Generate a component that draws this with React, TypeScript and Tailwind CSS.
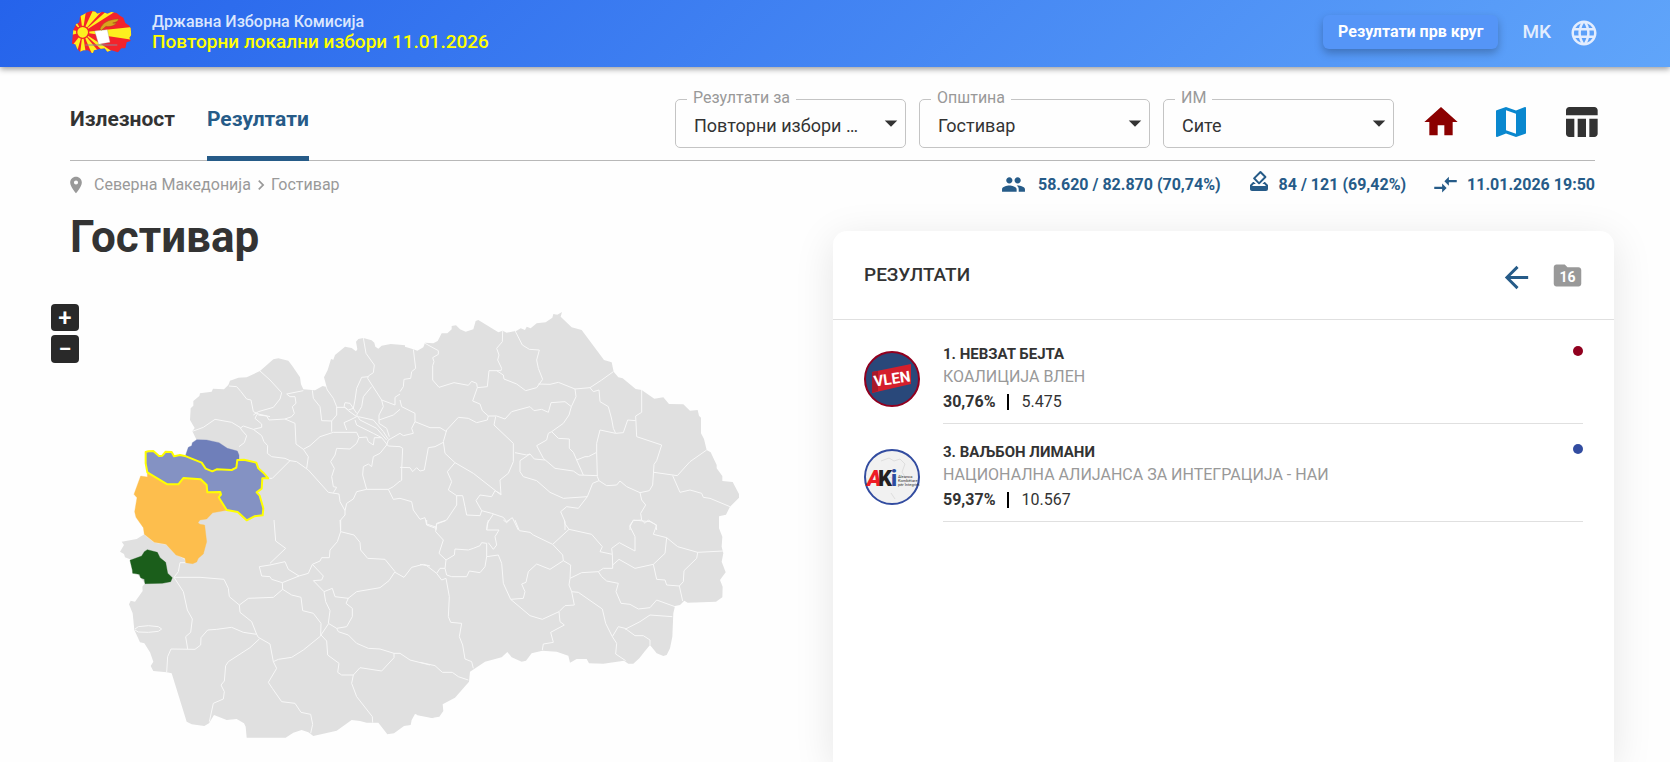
import React, { useState } from 'react'
import { MdArrowBack, MdArrowDropDown, MdChevronRight, MdCompareArrows, MdFolder, MdHome, MdHowToVote, MdLanguage, MdMap, MdPeople, MdPlace, MdTableChart } from 'react-icons/md'

// the map is split in four sheets, each with its own origin
const sheets = [
  {
    name: 'north-west',
    origin: 'translate(120 870)',
    land: '400,735 400,600 440,500 470,450 457,424 464,414 450,390 452,355 460,347 460,333 478,318 480,310 515,305 519,296 552,298 565,285 570,272 595,263 620,262 660,243 700,208 715,205 745,212 757,228 780,262 783,283 790,298 825,301 848,288 860,291 852,262 863,240 873,207 880,209 885,195 915,170 935,174 948,184 952,178 948,155 955,147 970,144 995,151 1003,158 1006,170 1015,176 1025,167 1052,162 1080,164 1095,166 1095,735',
    borders: [
      '457,424 490,412 525,388 575,397 600,412 605,420 620,437 613,458 597,470',
      '567,288 590,290 603,305 620,327 633,330 640,365 655,372 690,380',
      '660,243 690,270 725,308 720,327 700,352 655,365 640,375',
      '600,415 610,408 640,418 665,412 665,402 645,385 650,375 655,370',
      '655,375 680,378 687,390 735,387 755,380 763,370 757,350 768,340 765,320 750,320 740,312 790,302',
      '735,387 765,400 768,462 790,478 805,500 800,535',
      '640,418 665,437 672,455 683,467 682,490 695,500 735,505 750,512',
      '672,565 697,565 750,512 770,515 805,540 865,607 897,612 900,635 915,662 915,675 902,690 902,720',
      '817,301 820,325 840,350 845,392 875,393 890,375 890,350 880,325 862,300 858,290',
      '875,393 875,425',
      '790,478 810,467 840,440 880,427 950,427 957,443 980,441 985,455 1000,465 1003,443 1025,443 1045,468 1080,470',
      '957,443 950,460 930,477 890,475 885,495 872,515 883,535 875,560 880,590 890,592 880,608',
      '915,662 920,640 940,627 950,605 980,598 968,555 970,530 985,522 995,530 1000,500 1020,490 1040,465',
      '980,598 1045,598 1060,628 1080,625',
      '1045,598 1060,590 1080,573',
      '970,144 978,190 1003,225 1000,248 985,258 983,265 1025,330 1065,345 1065,322 1080,312',
      '985,260 965,262 950,295 945,330 940,355 925,360 912,350 915,338 930,340 950,370',
      '995,290 970,320 965,350 950,375',
      '1025,330 1030,350 1017,375 1017,400 1040,415 1048,440',
      '1017,390 1060,375 1080,358',
      '950,375 960,390 1010,415 1040,450',
      '955,380 1000,390 1030,425 1045,448',
      '890,352 915,352 925,362 950,380 930,390 912,398 920,420',
      '945,390 950,405 1000,430 1025,443',
      '1040,465 1045,450 1080,430',
    ],
  },
  {
    name: 'north-east',
    origin: 'translate(1200 870)',
    land: '-10,165 0,166 40,178 52,182 70,172 75,158 100,160 113,153 125,130 142,130 155,118 155,108 168,106 180,118 197,125 220,118 227,93 235,90 295,127 308,122 320,128 350,122 362,115 375,120 380,110 392,115 410,100 437,97 457,83 460,72 472,74 486,66 482,80 515,112 545,120 612,210 635,217 641,245 655,262 668,265 707,297 725,300 763,326 790,322 807,342 850,343 870,362 893,360 897,377 903,383 903,430 912,447 920,480 932,487 950,525 950,535 967,558 967,573 998,576 1017,612 1017,623 990,650 978,674 957,679 957,735 -10,735',
    borders: [
      '40,178 47,235 35,245 32,265 12,268 10,290 0,305',
      '75,160 115,182 115,193 98,203 102,215 98,227 98,270 117,292 162,278 205,286 215,274 230,280 232,293 218,333 240,342 247,362 265,378 290,378 315,387 335,365 390,350 402,362 425,358 445,367 453,338 495,335 514,350 507,375 490,400 455,425',
      '232,293 262,290 267,242 303,242 305,235 293,210 297,195 290,175 307,155 308,122',
      '290,242 310,255 312,267 350,282 377,302 410,293 428,268 415,235 410,210 418,180 388,178 367,165 345,122',
      '415,282 450,283 475,277 495,285 525,297 570,293 605,270 640,245',
      '525,297 528,320 514,350',
      '570,293 580,305 597,300 600,335 625,350 635,387 640,415 647,430 600,420 590,460 590,487 592,560 597,572',
      '725,300 725,367 707,378 710,440 785,465 770,512 762,523 758,585 748,602 720,608 680,590 660,573 650,585 620,587 597,572 578,580 562,620 535,655 500,650 482,665 495,695 495,720',
      '707,392 683,390 670,428 647,430',
      '762,547 832,557 870,515 920,480',
      '818,557 840,607 870,600 905,610 910,622 930,625 990,650',
      '562,620 490,625 450,607 410,572 370,560 360,545 360,512 390,492 403,507 435,510',
      '345,488 380,495 390,492',
      '455,425 445,430 440,450 410,467 430,505 465,535 520,543 537,555 592,557',
      '455,425 475,445 508,447 508,475 520,487 530,510 550,555',
      '530,510 555,500 565,500 590,487',
      '287,380 282,405 340,460 340,515 325,550 300,570 303,615 220,550 165,518 135,490 130,455 140,420 175,382 205,385 230,398 262,390 265,378',
      '45,370 45,395 90,413 120,413 140,425',
      '0,330 5,350 45,370',
      '45,395 35,415 40,430 10,437 0,430',
      '130,457 105,470 85,473 73,540 60,543 50,533 38,545 30,533 0,532',
      '0,470 8,475 5,540 5,570 0,575',
      '165,518 142,545 155,575 145,600 170,617 188,617 195,650 200,675 240,677 245,662 228,632 240,615 275,620 285,602 303,612',
      '170,617 170,645 140,690 110,700 107,715 80,705 75,683 60,688 40,660 35,635 0,625',
      '245,662 275,670 310,682 320,695 337,683 355,720',
      '280,672 262,700 260,720',
      '720,608 725,630 737,645 722,670 725,690 735,700 745,690 768,705 770,720',
      '725,690 700,692 690,705 690,720',
      '110,713 107,720',
    ],
  },
  {
    name: 'south-west',
    origin: 'translate(300 1560)',
    land: '133,0 133,43 110,57 65,65 72,75 60,95 72,102 75,112 90,118 110,160 135,190 127,200 128,213 105,245 92,242 87,253 98,280 103,330 120,367 133,370 150,397 160,425 152,438 160,453 200,457 215,460 260,605 275,613 313,618 327,610 342,585 380,600 410,597 432,610 437,620 440,653 557,653 580,638 605,630 625,637 640,648 710,632 755,600 780,603 800,608 835,608 862,643 882,640 912,618 932,615 935,600 945,582 990,592 1000,595 1000,0',
    borders: [
      '133,43 163,67 198,73 228,103 255,117 258,130',
      '257,128 240,128 235,155 222,172 300,172 372,178 385,205 388,230 418,255 445,235 520,232 548,208 547,188 515,178 510,170 485,168 478,140 510,135 555,125 565,148 597,168 547,188',
      '222,172 250,215 262,270 277,297 272,337 257,350 263,387',
      '200,457 203,410 213,387 285,388 302,375 303,353 323,330 350,328 395,322 430,337 470,343 475,352 510,372 520,425 530,445 505,487 517,505 545,545 585,550 603,577 632,583 638,613 632,640',
      '418,255 420,277 455,305 470,343',
      '478,357 450,383 385,425 377,437 373,483 363,495 373,515 370,537 340,550 328,605',
      '105,327 115,320 145,317 175,320 185,327 175,334 145,337 115,336 105,330',
      '520,425 535,418 575,412 610,390 662,348 663,310 640,280 608,272 603,232 575,225 548,208',
      '663,345 680,363 683,405 717,430 713,457 725,465 760,465 755,490 770,530 817,590 818,608',
      '760,465 780,443 845,453 882,413 882,400 840,387 805,385 770,370 745,345 715,335 710,325 740,320 757,290 757,265 738,250 745,235 705,230 697,205 672,215 677,245 690,272 685,310 710,325',
      '663,345 685,312',
      '522,0 527,63 557,85 510,130',
      '597,168 625,160 637,133 660,123 665,113 688,113 690,90 712,65 722,35 720,0',
      '722,35 762,45 780,67 782,90 803,115 855,118 885,155 867,182 840,203 770,215 742,237',
      '637,133 670,168 665,180 640,182 672,215',
      '885,157 912,172 935,142 970,133 990,138',
      '882,400 900,400 930,420 990,435',
    ],
  },
  {
    name: 'south-east',
    origin: 'translate(1260 1560)',
    land: '-10,0 897,0 897,25 907,50 905,80 910,100 905,125 917,157 900,180 908,200 907,232 888,245 803,248 793,242 780,255 765,258 760,280 757,350 750,385 740,405 730,408 710,400 690,375 675,393 658,415 640,431 625,431 612,422 550,431 507,430 500,417 470,417 450,428 445,407 410,395 367,392 335,400 318,422 305,425 275,412 262,396 245,412 195,425 150,455 147,485 105,533 68,553 70,573 58,590 35,594 0,587 -10,585',
    borders: [
      '0,427 45,437 67,457 97,457 115,470 145,480',
      '160,445 155,425 135,417 128,375 118,350 125,310 92,307 85,290 88,230 78,175 65,180 50,160 20,137 0,133',
      '50,160 60,145 75,145 80,165 95,170 140,170 148,153 180,158 195,140 200,110 200,70 185,68 180,77 160,85 145,90 105,87 103,105 78,120 75,145',
      '78,120 57,100 70,60 47,35 50,12 77,2',
      '50,22 20,12 20,0',
      '200,110 235,105 245,130 250,190 272,238 330,287 367,298 417,275 435,257 463,255 455,215 447,195 450,175 485,158 535,155 545,170 560,183 595,190 588,215 603,250 630,253 655,267 690,263 710,240 765,260',
      '272,238 310,235 315,215 305,192 318,187 325,155 350,132 390,148 430,122 452,135 450,175',
      '430,122 428,105 398,73 340,45 330,37 298,32 285,0',
      '398,73 447,28 515,43 547,80 540,95 577,103 578,135 597,118 645,145 700,133 735,100 740,53 700,43 710,15 690,5 640,0 630,20 645,50 645,93 598,68 575,85 577,103',
      '447,28 435,12 433,0',
      '535,155 550,145 578,145 578,135',
      '740,53 773,80 833,97 910,93',
      '833,97 830,115 792,152 790,185 778,198 740,195 735,180 710,178 700,133',
      '778,198 788,243',
      '455,215 475,217 547,267 557,310 577,350 590,370 587,402 617,422',
      '417,275 420,305 433,315 392,337 400,367 370,372 367,390',
      '577,350 595,320 615,325 645,347 670,347 690,360 690,375',
      '615,328 660,305 690,285 757,290',
      '205,0 200,30 237,30 225,50 230,75 220,88 205,68',
      '250,0 260,8 268,0',
    ],
  },
]

const regions = [
  { name: 'Боговиње', fill: '#6f7fba', points: '257,165 265,142 275,137 277,128 290,119 320,120 357,128 382,145 412,153 417,165 417,178 411,180 409,200 395,210 350,207 337,213 317,207 305,188 257,170' },
  { name: 'Маврово и Ростуше', fill: '#fdbe4d', points: '122,228 142,231 142,219 202,253 235,253 250,236 302,238 320,257 322,277 361,276 356,292 380,331 338,338 320,357 300,360 294,368 300,373 314,375 320,425 310,462 295,475 290,486 278,491 257,488 255,475 228,465 198,433 163,427 133,403 130,383 108,352 104,335 111,293 102,283' },
  { name: 'Центар Жупа', fill: '#1b5e1b', points: '90,481 125,468 133,455 142,449 172,457 180,473 197,487 203,520 217,533 212,545 187,550 135,551 133,538 122,533 118,523 98,520 97,510' },
]

const selectedRegion = '137,156 145,154 160,153 177,168 187,167 197,155 215,156 222,169 240,165 258,169 305,188 317,206 337,214 350,208 395,210 409,203 412,180 432,179 469,188 475,205 490,218 505,235 487,235 485,266 470,277 479,287 490,325 488,346 463,349 440,361 413,336 380,330 356,292 363,284 361,276 322,277 320,255 302,238 250,234 235,253 202,253 142,217 137,190'

const EmblemLogo = () => (
  <svg viewBox="0 0 180 126" className="w-15 h-[42px] shrink-0" aria-hidden="true">
    <defs>
      <clipPath id="emblem">
        <path d="M4 56 12 40 22 34 24 16 36 10 46 4 58 0 70 2 76 8 92 2 106 8 118 3 134 6 144 14 154 20 160 36 172 44 176 52 178 72 172 80 176 90 164 94 160 112 148 112 138 124 118 118 106 122 98 112 82 114 66 118 62 128 48 118 34 118 24 122 16 114 10 100 0 98 2 76Z" />
      </clipPath>
    </defs>
    <g clipPath="url(#emblem)">
      <path fill="#f3232b" d="M0 0h180v130H0z" />
      <g fill="#fdf01f">
        <path d="M32 64 180 48v38z" />
        <path d="M32 64 62 0h28z" />
        <path d="M32 64 104 0h28z" />
        <path d="M32 64 24 0h18z" />
        <path d="M32 64-4 26V6z" />
        <path d="M32 64-4 56v16z" />
        <path d="M32 64-4 110l18 16z" />
        <path d="M32 64 24 130h18z" />
        <path d="m32 64 30 70h28z" />
        <path d="m32 64 72 66h30z" />
      </g>
      <circle cx="32" cy="64" r="18" fill="#fdf01f" stroke="#f3232b" strokeWidth="4" />
    </g>
    <path fill="#fff" stroke="#999" d="m68 60 38-4 8 38-34 6z" />
    <path fill="#d8a51e" stroke="#7a5a10" d="M84 54c8-18 22-28 56-30-2 8-10 10-18 12 4 1 8 1 12 0-10 10-22 12-32 10l-14 12z" />
    <path stroke="#8a8a9a" strokeWidth="3" d="M40 102h96" />
  </svg>
)

const VlenLogo = () => (
  <svg viewBox="0 0 56 56" className="w-14 h-14 shrink-0" role="img" aria-label="ВЛЕН">
    <circle cx="28" cy="28" r="27" fill="#29487a" stroke="#91001f" strokeWidth="2" />
    <path fill="#d41f2c" d="M8 21 47 13v20L8 42z" />
    <path fill="#a8192a" d="M8 21l6-1v20l-6 2z" />
    <text x="28" y="33" textAnchor="middle" transform="rotate(-8 28 28)" className="fill-white font-bold text-[15px]">VLEN</text>
  </svg>
)

const AkiLogo = () => (
  <svg viewBox="0 0 56 56" className="w-14 h-14 shrink-0" role="img" aria-label="АКИ">
    <circle cx="28" cy="28" r="27" fill="#f1f1f1" stroke="#324ca0" strokeWidth="2" />
    <path d="M17 12l8-3 5 3 6-2 5 5-3 8 5 8-5 6-4-2M18 34l8-6 6 4M27 44l4 6" fill="none" stroke="#dedede" />
    <text x="3" y="37" className="fill-[#ee1c25] font-black italic text-[22px]">A</text>
    <text x="14" y="37" className="fill-[#231f20] font-black text-[22px]">K</text>
    <text x="27" y="37" className="fill-[#2b4ba0] font-black text-[22px]">i</text>
    <g className="fill-[#333] text-[4px]">
      <text x="34" y="29">Aleanca</text>
      <text x="34" y="33">Kombëtare</text>
      <text x="34" y="37">për Integrim</text>
    </g>
  </svg>
)

const results = [
  { name: '1. НЕВЗАТ БЕЈТА', party: 'КОАЛИЦИЈА ВЛЕН', percent: '30,76%', votes: '5.475', dot: 'bg-[#91001f]', logo: <VlenLogo /> },
  { name: '3. ВАЉБОН ЛИМАНИ', party: 'НАЦИОНАЛНА АЛИЈАНСА ЗА ИНТЕГРАЦИЈА - НАИ', percent: '59,37%', votes: '10.567', dot: 'bg-[#324ca0]', logo: <AkiLogo /> },
]

const filters = [
  { id: 'type', label: 'Резултати за', options: ['Повторни избори 11.01.2026'] },
  { id: 'municipality', label: 'Општина', options: ['Гостивар'] },
  { id: 'station', label: 'ИМ', options: ['Сите'] },
]

const Filter = ({ id, label, options }: { id: string; label: string; options: string[] }) => {
  const [value, setValue] = useState(options[0])

  return (
    <div className="relative w-[231px]">
      <label htmlFor={id} className="absolute -top-[11px] left-3 px-1.5 bg-[#fefefe] text-base leading-5 text-[#999]">
        {label}
      </label>
      <select id={id} value={value} onChange={(e) => setValue(e.target.value)} className="w-full h-[49px] pl-[18px] pr-10 pt-1 appearance-none truncate bg-transparent border border-[#c4c4c4] rounded-[5px] text-lg text-[#333]">
        {options.map((option) => (
          <option key={option}>{option}</option>
        ))}
      </select>
      <MdArrowDropDown className="absolute right-0 top-2 w-[30px] h-8 text-[#333] pointer-events-none" />
    </div>
  )
}

const MunicipalityMap = () => (
  <svg viewBox="156 870 2343 1416" className="w-full" role="img" aria-label="Мапа на општини">
    {sheets.map((sheet) => (
      <polygon key={sheet.name} transform={sheet.origin} points={sheet.land} fill="#e0e0e0" />
    ))}
    {sheets.map((sheet) => (
      <g key={sheet.name} transform={sheet.origin} fill="none" stroke="#f8f8f8" strokeWidth="3" strokeLinejoin="round">
        {sheet.borders.map((points) => (
          <polyline key={points} points={points} />
        ))}
      </g>
    ))}
    <g transform="translate(300 1200)" strokeLinejoin="round">
      {regions.map((region) => (
        <polygon key={region.name} points={region.points} fill={region.fill} stroke={region.fill} strokeWidth="1" />
      ))}
      <polygon points={selectedRegion} fill="#8492c3" stroke="#ffff00" strokeWidth="6" />
    </g>
  </svg>
)

const App = () => {
  const [tab, setTab] = useState('results')

  const tabClass = (name: string) => (tab === name ? 'border-[#265b88] text-[#265b88]' : 'border-transparent text-[#333]')

  return (
    <div className="min-h-screen flex flex-col bg-[#fefefe] font-[Roboto,sans-serif] text-[#333]">
      <header className="relative flex items-center justify-between h-[67px] pl-[72px] pr-[71px] pb-1 bg-[linear-gradient(135deg,#2563eb,#60a5fa)] shadow-[0_2px_6px_rgba(0,0,0,0.4)]">
        <div className="flex items-center gap-5">
          <EmblemLogo />
          <div className="font-medium">
            <p className="text-base leading-5 text-[#dbe7fd]">Државна Изборна Комисија</p>
            <p className="text-[19px] leading-5 text-[#ffff00]">Повторни локални избори 11.01.2026</p>
          </div>
        </div>
        <div className="flex items-center text-[#e3edfe]">
          <button className="h-[34px] px-[15px] rounded-md bg-[#5595f7] font-bold text-base text-white shadow-[0_4px_8px_rgba(0,0,0,0.25)]">Резултати прв круг</button>
          <button className="ml-6 pt-0.5 text-[19px] font-medium">MK</button>
          <button className="ml-[18px] pt-0.5" aria-label="Јазик">
            <MdLanguage className="w-[30px] h-[30px]" />
          </button>
        </div>
      </header>

      <nav className="flex justify-between ml-[70px] mr-[75px] h-[94px] border-b border-[#b8b8b8]">
        <div className="flex gap-8 -mb-px text-[21px] font-bold">
          <button className={`pt-4 border-b-5 ${tabClass('turnout')}`} onClick={() => setTab('turnout')}>
            Излезност
          </button>
          <button className={`pt-4 border-b-5 ${tabClass('results')}`} onClick={() => setTab('results')}>
            Резултати
          </button>
        </div>
        <div className="flex items-start gap-[13px] pt-8">
          {filters.map((filter) => (
            <Filter key={filter.id} {...filter} />
          ))}
          <div className="flex gap-[30px] ml-[14px] -mr-1.5 pt-[3px]">
            <a href="#home" aria-label="Почетна">
              <MdHome className="w-10 h-10 text-[#8b0000]" />
            </a>
            <a href="#map" aria-label="Мапа">
              <MdMap className="w-10 h-10 text-[#0a88cf]" />
            </a>
            <a href="#table" aria-label="Табела">
              <MdTableChart className="w-10 h-10" />
            </a>
          </div>
        </div>
      </nav>

      <div className="flex items-center justify-between ml-[66px] mr-[75px] h-12">
        <div className="flex items-center text-[#999]">
          <MdPlace className="w-5 h-5 mr-2" />
          <a href="#mk">Северна Македонија</a>
          <MdChevronRight className="w-5 h-5" />
          <a href="#gostivar">Гостивар</a>
        </div>
        <div className="flex items-center gap-[26px] font-bold text-[#265b88]">
          <p className="flex items-center gap-3">
            <MdPeople className="w-[25px] h-[25px] mb-0.5" />
            58.620 / 82.870 (70,74%)
          </p>
          <p className="flex items-center gap-2">
            <MdHowToVote className="w-6 h-6 mb-2" />
            84 / 121 (69,42%)
          </p>
          <p className="flex items-center gap-2">
            <MdCompareArrows className="w-[27px] h-[27px] mb-0.5" />
            11.01.2026 19:50
          </p>
        </div>
      </div>

      <main className="grow grid grid-cols-2 pl-[52px] pr-14">
        <section>
          <h1 className="h-[81px] pl-[18px] text-[44px] leading-[56px] font-bold">Гостивар</h1>
          <div className="relative">
            <div className="absolute top-[14px] -left-px flex flex-col gap-1">
              <button className="w-7 h-[27px] rounded bg-[#292929] text-2xl leading-6 font-medium text-white" aria-label="Зголеми">+</button>
              <button className="w-7 h-[28px] rounded bg-[#292929] text-2xl leading-6 font-medium text-white" aria-label="Намали">−</button>
            </div>
            <MunicipalityMap />
          </div>
        </section>

        <section className="mt-[22px] rounded-t-[14px] bg-white shadow-[0_8px_40px_rgba(0,0,0,0.1)]">
          <div className="flex items-center justify-between h-[89px] pl-[31px] pr-[30px] border-b border-[#e0e0e0]">
            <h2 className="text-[19px] font-medium">РЕЗУЛТАТИ</h2>
            <div className="flex items-center gap-[17px]">
              <button aria-label="Назад" className="pt-1">
                <MdArrowBack className="w-[35px] h-[35px] text-[#265b88]" />
              </button>
              <button className="relative text-[#999]">
                <MdFolder className="w-[33px] h-[33px]" />
                <span className="absolute inset-0 flex items-center justify-center pt-1 text-sm font-bold text-white">16</span>
              </button>
            </div>
          </div>
          <ul className="px-[31px] pt-1.5">
            {results.map((result) => (
              <li key={result.name} className="flex gap-[23px]">
                <div className="pt-[25px]">{result.logo}</div>
                <div className="grow flex justify-between pt-[18px] h-[98px] border-b border-[#e0e0e0]">
                  <div>
                    <p className="text-[15px] leading-[21px] font-bold">{result.name}</p>
                    <p className="text-base leading-6 text-[#999]">{result.party}</p>
                    <p className="flex items-center text-base leading-[25px]">
                      <span className="font-bold">{result.percent}</span>
                      <span className="w-0.5 h-4 mx-3 bg-black"></span>
                      {result.votes}
                    </p>
                  </div>
                  <span className={`w-2.5 h-2.5 mt-0.5 rounded-full ${result.dot}`}></span>
                </div>
              </li>
            ))}
          </ul>
        </section>
      </main>
    </div>
  )
}

export default App
